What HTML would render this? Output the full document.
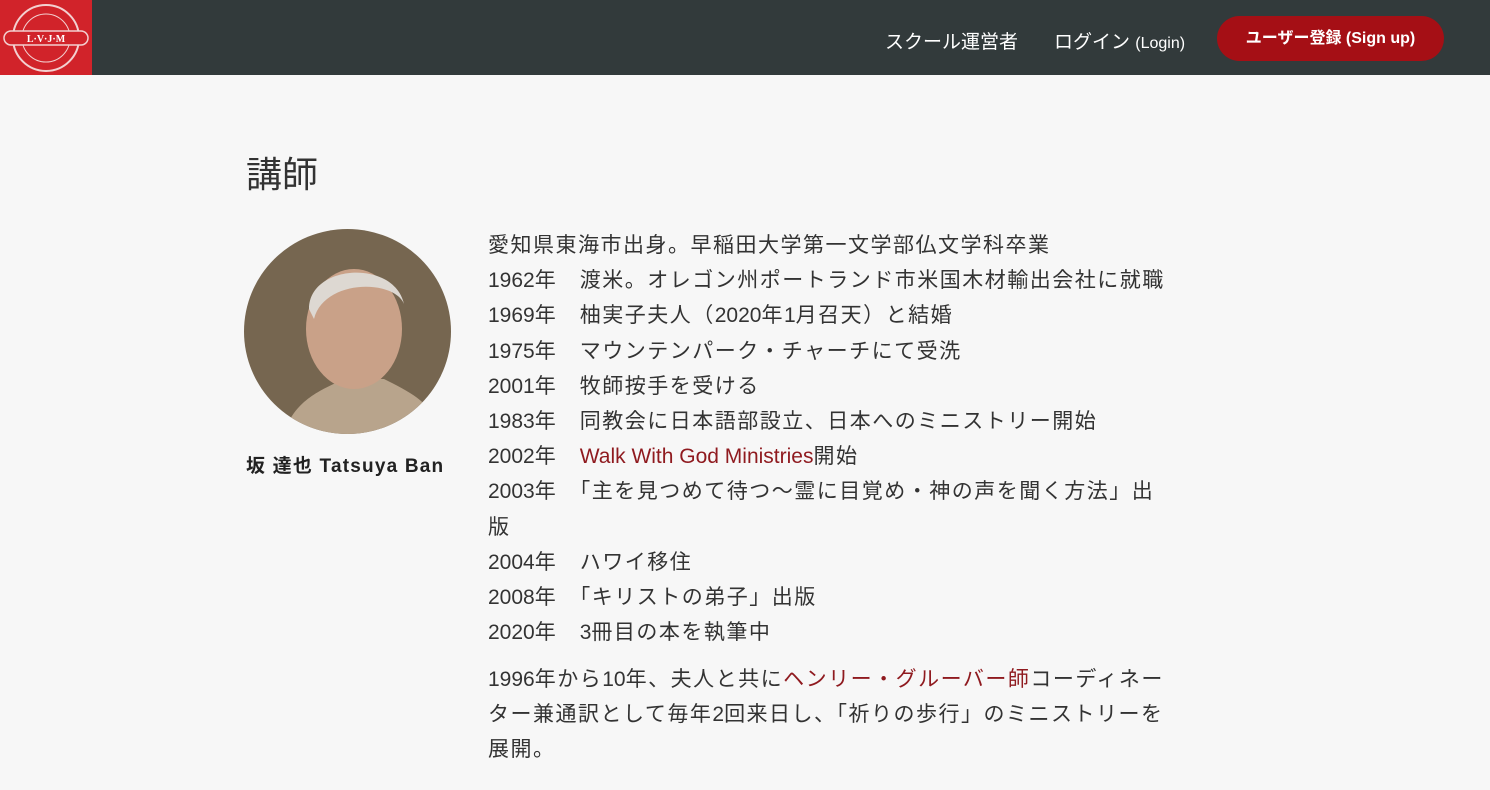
<!DOCTYPE html>
<html><head><meta charset="utf-8"><style>
*{margin:0;padding:0;box-sizing:border-box}
body{width:1490px;height:790px;overflow:hidden;background:#f7f7f7;font-family:"Liberation Sans","Noto Sans CJK JP",sans-serif;color:#333}
.hdr{position:absolute;left:0;top:0;width:1490px;height:75px;background:#323a3b}
.logo{position:absolute;left:0;top:0;width:92px;height:75px;background:#d1232a}
.nav{position:absolute;top:27px;color:#fff;font-size:19px}
.btn{position:absolute;left:1217px;top:16px;width:227px;height:45px;border-radius:23px;background:#a50f15;color:#fff;font-weight:bold;font-size:16px;text-align:center;line-height:45px}
h1{position:absolute;left:246px;top:146px;font-size:36px;font-weight:normal;color:#333;letter-spacing:0px}
.ph{position:absolute;left:244px;top:229px;width:207px;height:205px;border-radius:50%;background:#766650;overflow:hidden}
.name{position:absolute;left:246px;top:451px;font-size:19px;font-weight:bold;color:#222;letter-spacing:1.2px}
.txt{position:absolute;left:488px;top:228px;width:720px;font-size:21px;letter-spacing:1.5px;line-height:35.2px;color:#333;white-space:nowrap}
.n{letter-spacing:0}
.r{color:#8f1a1f}
p.b{margin-top:12px;line-height:35px}
</style></head><body>
<div class="hdr">
<div class="logo"><svg width="92" height="75" viewBox="0 0 92 75">
<circle cx="46" cy="38" r="33" fill="none" stroke="#f3d0d0" stroke-width="2"/>
<circle cx="46" cy="38" r="24" fill="none" stroke="#f3d0d0" stroke-width="1"/>
<rect x="4" y="31" width="84" height="14" rx="7" fill="#d1232a" stroke="#f3d0d0" stroke-width="1.5"/>
<text x="46" y="42" font-size="10" fill="#fff" text-anchor="middle" font-family="Liberation Serif" font-weight="bold">L·V·J·M</text>
</svg></div>
<div class="nav" style="left:885px">スクール運営者</div>
<div class="nav" style="left:1054px">ログイン <span style="font-size:16px">(Login)</span></div>
<div class="btn">ユーザー登録 (Sign up)</div>
</div>
<h1>講師</h1>
<div class="ph"><svg width="207" height="205" viewBox="0 0 207 205">
<path d="M40 205 C50 170 80 160 100 150 L140 150 C170 165 190 175 195 205Z" fill="#b8a48c"/>
<ellipse cx="110" cy="100" rx="48" ry="60" fill="#c9a188"/>
<path d="M65 80 C65 35 150 30 160 75 C150 50 80 50 70 90Z" fill="#ddd8d2"/>
</svg></div>
<div class="name">坂 達也 Tatsuya Ban</div>
<div class="txt">
<div>愛知県東海市出身。早稲田大学第一文学部仏文学科卒業</div>
<div><span class="n">1962</span>年　渡米。オレゴン州ポートランド市米国木材輸出会社に就職</div>
<div><span class="n">1969</span>年　柚実子夫人（<span class="n">2020</span>年<span class="n">1</span>月召天）と結婚</div>
<div><span class="n">1975</span>年　マウンテンパーク・チャーチにて受洗</div>
<div><span class="n">2001</span>年　牧師按手を受ける</div>
<div><span class="n">1983</span>年　同教会に日本語部設立、日本へのミニストリー開始</div>
<div><span class="n">2002</span>年　<span class="r n">Walk With God Ministries</span>開始</div>
<div><span class="n">2003</span>年　「主を見つめて待つ～霊に目覚め・神の声を聞く方法」出<br>版</div>
<div><span class="n">2004</span>年　ハワイ移住</div>
<div><span class="n">2008</span>年　「キリストの弟子」出版</div>
<div><span class="n">2020</span>年　<span class="n">3</span>冊目の本を執筆中</div>
<p class="b"><span class="n">1996</span>年から<span class="n">10</span>年、夫人と共に<span class="r">ヘンリー・グルーバー師</span>コーディネー<br>ター兼通訳として毎年<span class="n">2</span>回来日し、「祈りの歩行」のミニストリーを<br>展開。</p>
</div>
</body></html>
